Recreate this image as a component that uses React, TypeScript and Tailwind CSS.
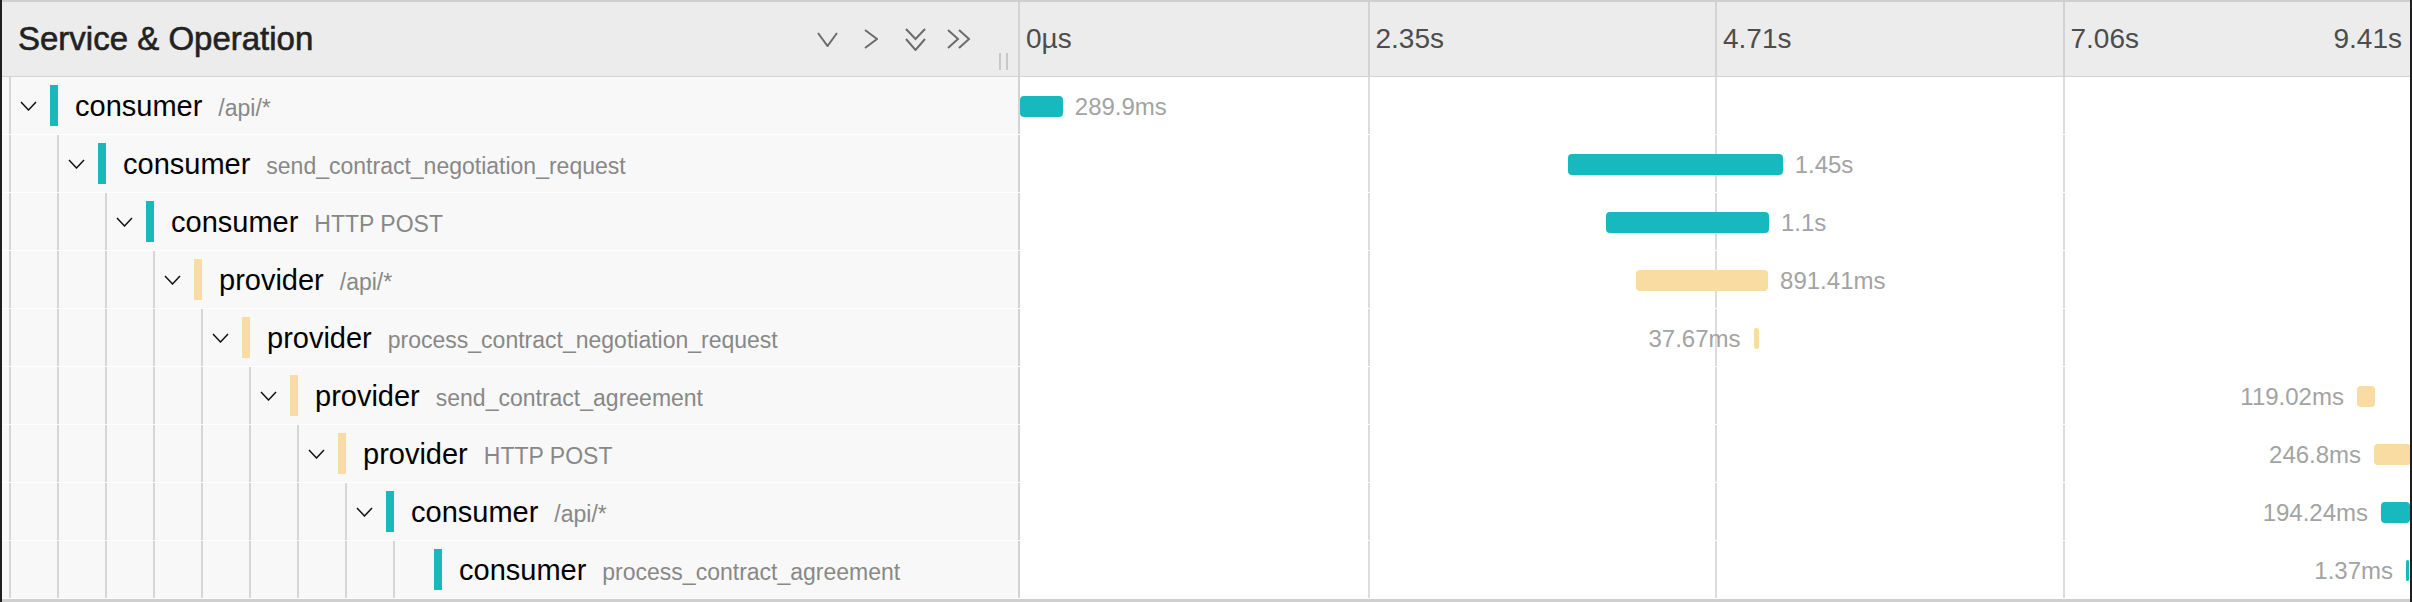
import React from 'react';

type Span = {
  depth: number;
  service: string;
  op: string;
  bar: string;
  start: number; // seconds from trace start
  dur: number; // seconds
  durLabel: string;
  labelLeft?: boolean;
  leaf?: boolean;
};

const TOTAL = 9.41;
const TEAL = 'bg-[#17b8be]';
const SAND = 'bg-[#f8dca1]';

const spans: Span[] = [
  { depth: 0, service: 'consumer', op: '/api/*', bar: TEAL, start: 0, dur: 0.2899, durLabel: '289.9ms' },
  { depth: 1, service: 'consumer', op: 'send_contract_negotiation_request', bar: TEAL, start: 3.713, dur: 1.45, durLabel: '1.45s' },
  { depth: 2, service: 'consumer', op: 'HTTP POST', bar: TEAL, start: 3.97, dur: 1.1, durLabel: '1.1s' },
  { depth: 3, service: 'provider', op: '/api/*', bar: SAND, start: 4.173, dur: 0.89141, durLabel: '891.41ms' },
  { depth: 4, service: 'provider', op: 'process_contract_negotiation_request', bar: SAND, start: 4.966, dur: 0.03767, durLabel: '37.67ms', labelLeft: true },
  { depth: 5, service: 'provider', op: 'send_contract_agreement', bar: SAND, start: 9.051, dur: 0.11902, durLabel: '119.02ms', labelLeft: true },
  { depth: 6, service: 'provider', op: 'HTTP POST', bar: SAND, start: 9.167, dur: 0.2468, durLabel: '246.8ms', labelLeft: true },
  { depth: 7, service: 'consumer', op: '/api/*', bar: TEAL, start: 9.214, dur: 0.19424, durLabel: '194.24ms', labelLeft: true },
  { depth: 8, service: 'consumer', op: 'process_contract_agreement', bar: TEAL, start: 9.383, dur: 0.00137, durLabel: '1.37ms', labelLeft: true, leaf: true },
];

const ticks = ['0µs', '2.35s', '4.71s', '7.06s'];

function RowChevron() {
  return (
    <svg width="17" height="10" viewBox="0 0 17 10" fill="none">
      <polyline points="1,1 8.5,9 16,1" stroke="#111" strokeWidth="1.5" />
    </svg>
  );
}

function HeaderIcons() {
  const stroke = '#6b6b6b';
  return (
    <div className="ml-auto mr-[47px] flex items-center">
      <svg width="21" height="15" viewBox="0 0 21 15" fill="none">
        <polyline points="1,1 10.5,14 20,1" stroke={stroke} strokeWidth="2" />
      </svg>
      <svg className="ml-[26px]" width="14" height="20" viewBox="0 0 14 20" fill="none">
        <polyline points="1,1 13,10 1,19" stroke={stroke} strokeWidth="2" />
      </svg>
      <svg className="ml-[27px]" width="21" height="23" viewBox="0 0 21 23" fill="none">
        <polyline points="1,1 10.5,11 20,1" stroke={stroke} strokeWidth="2" />
        <polyline points="1,11 10.5,22 20,11" stroke={stroke} strokeWidth="2" />
      </svg>
      <svg className="ml-[21px]" width="24" height="20" viewBox="0 0 24 20" fill="none">
        <polyline points="1,1 11,10 1,19" stroke={stroke} strokeWidth="2" />
        <polyline points="12,1 22,10 12,19" stroke={stroke} strokeWidth="2" />
      </svg>
    </div>
  );
}

function TraceRow({ s }: { s: Span }) {
  const left = (s.start / TOTAL) * 100;
  const width = (s.dur / TOTAL) * 100;
  return (
    <div className="flex h-[58px] border-b border-white">
      {/* service + operation tree */}
      <div className="flex w-[1018px] shrink-0 border-r-2 border-[#d3d3d3] bg-[#f8f8f8] pl-[7px]">
        {Array.from({ length: s.depth }).map((_, i) => (
          <div key={i} className="w-[48px] shrink-0 border-l-2 border-[#d6d6d6]" />
        ))}
        <div className="flex items-center border-l-2 border-[#d6d6d6] pl-[9px]">
          <span className="flex w-[17px] items-center">{!s.leaf && <RowChevron />}</span>
          <span className={`ml-[13px] h-[41px] w-[8px] ${s.bar}`} />
          <span className="ml-[17px] flex items-baseline whitespace-nowrap pt-[2px]">
            <span className="text-[29px] text-black">{s.service}</span>
            <span className="ml-[16px] text-[23px] text-[#888]">{s.op}</span>
          </span>
        </div>
      </div>

      {/* timeline */}
      <div className="relative grid flex-1 grid-cols-4 bg-white">
        <div />
        <div className="border-l-2 border-[#dcdcdc]" />
        <div className="border-l-2 border-[#dcdcdc]" />
        <div className="border-l-2 border-[#dcdcdc]" />
        <div
          className={`absolute top-[19px] h-[21px] min-w-[3px] rounded-[4px] ${s.bar}`}
          style={{ left: `${left}%`, width: `${width}%` }}
        >
          <span
            className={`absolute top-1/2 -translate-y-1/2 whitespace-nowrap text-[24px] text-[#a3a3a3] ${
              s.labelLeft ? 'right-full mr-[13px]' : 'left-full ml-[12px]'
            }`}
          >
            {s.durLabel}
          </span>
        </div>
      </div>
    </div>
  );
}

export default function App() {
  return (
    <div className="h-[602px] w-[2412px] bg-[#1f1f1f] px-[2px] font-['Liberation_Sans',Arial,sans-serif]">
      <div className="flex h-full flex-col overflow-hidden border-t-2 border-b-[3px] border-[#cfcfcf] bg-white">
        {/* header */}
        <div className="flex h-[75px] shrink-0 border-b border-[#d3d3d3] bg-[#ececec]">
          <div className="relative flex w-[1018px] shrink-0 items-center border-r-2 border-[#d3d3d3] pl-[16px]">
            <span className="text-[33px] text-[#222] [-webkit-text-stroke:0.6px_#222]">Service &amp; Operation</span>
            <HeaderIcons />
            <div className="absolute right-[10px] top-[51px] flex gap-[5px]">
              <span className="h-[17px] w-[2px] bg-[#c8c8c8]" />
              <span className="h-[17px] w-[2px] bg-[#c8c8c8]" />
            </div>
          </div>
          <div className="grid flex-1 grid-cols-4 text-[28px] text-[#4d4d4d]">
            {ticks.map((t, i) => (
              <div
                key={t}
                className={`flex items-center justify-between pl-[6px] ${i > 0 ? 'border-l-2 border-[#d3d3d3]' : ''} ${
                  i === 3 ? 'pr-[8px]' : ''
                }`}
              >
                <span>{t}</span>
                {i === 3 && <span>9.41s</span>}
              </div>
            ))}
          </div>
        </div>

        {/* rows */}
        {spans.map((s, i) => (
          <TraceRow key={i} s={s} />
        ))}
      </div>
    </div>
  );
}
